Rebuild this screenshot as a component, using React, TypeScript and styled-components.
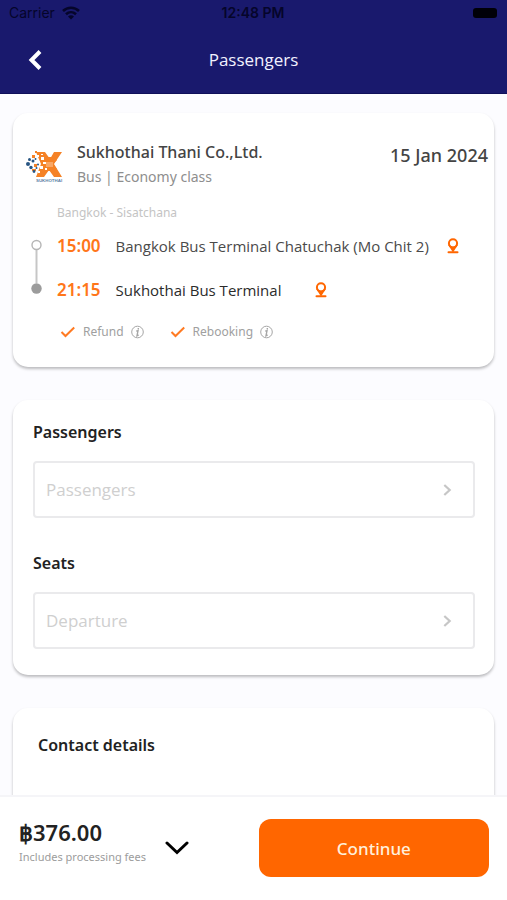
import React, { useId } from "react";
import styled, { createGlobalStyle } from "styled-components";

const orange = "#ff6600";
const lightText = `"Open Sans", "Noto Sans", sans-serif`;

const GlobalStyle = createGlobalStyle`
  *, *::before, *::after { box-sizing: border-box; }
  body { margin: 0; background: #fcfcff; }
  body, button { font-family: "Noto Sans", "Open Sans", sans-serif; }
  h1, h2, p, ul { margin: 0; padding: 0; }
  button { margin: 0; padding: 0; border: 0; background: none; cursor: pointer; }
  svg { display: block; flex: none; }
`;

const Screen = styled.div`
  display: flex;
  flex-direction: column;
  height: 100vh;
`;

const Header = styled.header`
  flex: none;
  background: #19196d;
  border-bottom: 1px solid #10105a;
`;

const StatusBar = styled.div`
  display: grid;
  grid-template-columns: 1fr auto 1fr;
  align-items: center;
  height: 26px;
  padding: 0 10px 0 9px;
  color: #05052a;
  font-family: Inter, sans-serif;
  font-size: 14px;
  line-height: 26px;
`;

const Carrier = styled.span`
  display: flex;
  align-items: center;
  gap: 7px;
`;

const Clock = styled.time`
  font-weight: 600;
`;

const Battery = styled.span`
  justify-self: end;
  width: 24px;
  height: 10px;
  border-radius: 3px;
  background: #000008;
`;

const TitleBar = styled.div`
  display: grid;
  grid-template-columns: 48px 1fr 48px;
  align-items: center;
  height: 67px;
  padding: 0 11px;
`;

const Title = styled.h1`
  color: #f2f2ff;
  font-family: ${lightText};
  font-size: 17px;
  font-weight: 400;
  line-height: 24px;
  text-align: center;
`;

const BackButton = styled.button`
  display: grid;
  place-items: center;
  width: 48px;
  height: 48px;
`;

const Content = styled.main`
  flex: 1;
  min-height: 0;
  overflow-y: auto;
  scrollbar-width: none;
  display: flex;
  flex-direction: column;
  gap: 33px;
  padding: 19px 13px 34px;
`;

const Card = styled.section`
  flex: none;
  border-radius: 15px;
  background: #fff;
  box-shadow: 0 2px 3px rgba(0, 0, 0, 0.26);
`;

const TripCard = styled(Card)`
  padding: 27px 6px 25px 12px;
`;

const FormCard = styled(Card)`
  display: flex;
  flex-direction: column;
  gap: 33px;
  padding: 20px 19px 26px 20px;
`;

const ContactCard = styled(Card)`
  min-height: 160px;
  padding: 25px;
`;

const Operator = styled.div`
  display: flex;
  align-items: flex-start;
`;

const OperatorText = styled.div`
  flex: 1;
  margin-left: 12px;
`;

const LogoBox = styled.div`
  padding-top: 9px;
`;

const OperatorName = styled.h2`
  color: #444;
  font-size: 16px;
  font-weight: 500;
  line-height: 25px;
`;

const ServiceClass = styled.p`
  color: #8e8e8e;
  font-size: 14px;
  line-height: 24px;
`;

const TravelDate = styled.time`
  padding-top: 3px;
  color: #444;
  font-size: 18px;
  font-weight: 500;
  line-height: 25px;
`;

const Route = styled.p`
  margin: 15px 0 12px 32px;
  color: #c4c4c4;
  font-size: 12px;
  line-height: 18px;
`;

const Journey = styled.div`
  display: flex;
  gap: 15px;
  padding-left: 6px;
`;

const Stops = styled.ul`
  flex: 1;
  list-style: none;
`;

const Stop = styled.li`
  display: flex;
  align-items: center;
  height: 44px;
  padding-bottom: 20px;
  line-height: 24px;
`;

const StopTime = styled.time`
  color: #ff761a;
  font-size: 17px;
  font-weight: 600;
`;

const StopName = styled.span<{ $strong?: boolean }>`
  margin-left: 15px;
  color: ${(p) => (p.$strong ? "#2b2b2b" : "#4a4a4a")};
  font-family: ${lightText};
  font-size: 15px;
`;

const PinButton = styled.button<{ $gap: number }>`
  margin-left: ${(p) => p.$gap}px;
`;

const Perks = styled.ul`
  display: flex;
  gap: 26px;
  margin-left: 35px;
  list-style: none;
`;

const Perk = styled.li`
  display: flex;
  align-items: center;
  gap: 7px;
  color: #a0a0a0;
  font-size: 12px;
  line-height: 20px;
`;

const Heading = styled.h2`
  color: #222;
  font-size: 16px;
  font-weight: 600;
  line-height: 24px;
`;

const Picker = styled.button`
  display: flex;
  align-items: center;
  justify-content: space-between;
  width: 100%;
  height: 57px;
  margin-top: 17px;
  padding: 0 18px 0 11px;
  border: 2px solid #eaeaec;
  border-radius: 4px;
  color: #cfcfcf;
  font-family: ${lightText};
  font-size: 17px;
`;

const Footer = styled.footer`
  flex: none;
  display: flex;
  align-items: flex-start;
  justify-content: space-between;
  padding: 22px 18px 23px 19px;
  border-top: 2px solid #f5f5f8;
  background: #fff;
`;

const Summary = styled.div`
  display: flex;
  align-items: center;
  gap: 19px;
`;

const Price = styled.p`
  color: #222;
  font-size: 22px;
  font-weight: 600;
  line-height: 26px;
`;

const FeeNote = styled.p`
  color: #9c9c9c;
  font-size: 11px;
  line-height: 24px;
`;

const DetailsButton = styled.button`
  padding-top: 8px;
`;

const ContinueButton = styled.button`
  width: 49%;
  height: 58px;
  border-radius: 12px;
  background: ${orange};
  color: #fff0dc;
  font-size: 17px;
  font-weight: 500;
`;

const WifiIcon = () => (
  <svg width="18" height="14" viewBox="0 0 18 14" fill="none" stroke="currentColor" strokeWidth="2.6" aria-hidden="true">
    <path d="M1 5C5.6.7 12.4.7 17 5M4 8.2c2.9-2.7 7.1-2.7 10 0" />
    <path d="M9 13.5 6 10.5c1.8-1.6 4.2-1.6 6 0z" fill="currentColor" stroke="none" />
  </svg>
);

const BackIcon = () => (
  <svg width="14" height="20" viewBox="0 0 14 20" fill="none" stroke="#fff" strokeWidth="4" aria-hidden="true">
    <path d="M12 1.5 3.5 10l8.5 8.5" />
  </svg>
);

const PinIcon = () => (
  <svg width="12" height="16" viewBox="0 0 12 16" fill="none" stroke={orange} aria-hidden="true">
    <circle cx="6" cy="5.3" r="4.1" strokeWidth="2" />
    <path d="M3 8.4 6 13l3-4.6-3 1.3z" fill={orange} strokeWidth="1.6" />
    <path d="M1.5 14.3h9" strokeWidth="2" strokeLinecap="round" />
  </svg>
);

const CheckIcon = () => (
  <svg width="16" height="12" viewBox="0 0 16 12" fill="none" stroke="#ff7a22" strokeWidth="2" aria-hidden="true">
    <path d="m1.5 6 4 4L14.2 1.5" />
  </svg>
);

const InfoIcon = () => (
  <svg width="13" height="14" viewBox="0 0 13 14" fill="none" stroke="#a6a6a6" aria-hidden="true">
    <circle cx="6.5" cy="7" r="5.8" />
    <path d="M7.3 3v1.4M5.2 6.2l1.8-.5-1 5 1.6-.7" strokeWidth="1.4" />
  </svg>
);

const ForwardIcon = () => (
  <svg width="12" height="12" viewBox="0 0 12 12" fill="none" stroke="#c6c6c6" strokeWidth="2.2" aria-hidden="true">
    <path d="m1.3 1 5.4 5-5.4 5" />
  </svg>
);

const ExpandIcon = () => (
  <svg width="24" height="14" viewBox="0 0 24 14" fill="none" stroke="#000" strokeWidth="3" strokeLinecap="round" aria-hidden="true">
    <path d="m2 2 10 9.5L22 2" />
  </svg>
);

const Timeline = () => (
  <svg width="11" height="60" viewBox="0 0 11 60" fill="none" aria-hidden="true">
    <path d="M5.5 16v33" stroke="#c6c6c6" strokeWidth="2" />
    <circle cx="5.5" cy="11" r="4.5" fill="#fff" stroke="#b5b5b5" strokeWidth="1.4" />
    <circle cx="5.5" cy="54.5" r="5.2" fill="#9c9c9c" />
  </svg>
);

const OperatorLogo = () => (
  <svg width="40" height="33" viewBox="0 0 40 33" role="img" aria-label="Sukhothai">
    <path d="M11 3h9l5 7 4-7h8l-8 12 8 13h-8l-5-7-5 7h-8l5-13z" fill="#f58226" />
    <path d="M15 8h14l3 3-4 4 4 5-3 2H18z" fill="#f58226" />
    <g fill="#f58226">
      <path d="M7 6h3v3H7zM9 15h3v3H9zM10 2h2v2h-2zM7 20h4v2H7z" />
    </g>
    <path d="M11 6h3v2h-3zM16 8h3v3h-3zM12 12h3v2h-3zM18 13h3v2h-3zM15 17h3v3h-3zM20 19h2v2h-2zM13 22h2v2h-2zM16 5h2v1h-2z" fill="#fff" />
    <path d="M21 13h7v5h-7z" fill="#f9a765" />
    <g fill="#285582">
      <circle cx="4.5" cy="10.5" r="1.5" />
      <circle cx="8" cy="12" r="1.5" />
      <circle cx="3" cy="15" r="2" />
      <circle cx="6" cy="18.5" r="1.7" />
      <circle cx="10.5" cy="10" r="1" />
      <circle cx="9" cy="22.5" r="1.4" />
      <circle cx="11.5" cy="19" r="1" />
      <circle cx="13" cy="15.5" r="1" />
    </g>
    <text x="11" y="32.5" fill="#5d82a6" fontSize="4.4" fontWeight="700" fontFamily="Liberation Sans, sans-serif">SUKHOTHAI</text>
  </svg>
);

function PickerField({ label, placeholder }: { label: string; placeholder: string }) {
  const id = useId();
  return (
    <div>
      <Heading id={id}>{label}</Heading>
      <Picker type="button" aria-labelledby={id} aria-haspopup="dialog">
        <span>{placeholder}</span>
        <ForwardIcon />
      </Picker>
    </div>
  );
}

const stops = [
  { time: "15:00", name: "Bangkok Bus Terminal Chatuchak (Mo Chit 2)", strong: false, gap: 18 },
  { time: "21:15", name: "Sukhothai Bus Terminal", strong: true, gap: 34 },
];

const perks = ["Refund", "Rebooking"];

export default function App() {
  return (
    <>
      <GlobalStyle />
      <Screen>
        <Header>
          <StatusBar>
            <Carrier>Carrier <WifiIcon /></Carrier>
            <Clock>12:48 PM</Clock>
            <Battery />
          </StatusBar>
          <TitleBar>
            <BackButton type="button" aria-label="Back"><BackIcon /></BackButton>
            <Title>Passengers</Title>
          </TitleBar>
        </Header>
        <Content>
          <TripCard>
            <Operator>
              <LogoBox><OperatorLogo /></LogoBox>
              <OperatorText>
                <OperatorName>Sukhothai Thani Co.,Ltd.</OperatorName>
                <ServiceClass>Bus | Economy class</ServiceClass>
              </OperatorText>
              <TravelDate dateTime="2024-01-15">15 Jan 2024</TravelDate>
            </Operator>
            <Route>Bangkok - Sisatchana</Route>
            <Journey>
              <Timeline />
              <Stops>
                {stops.map((s) => (
                  <Stop key={s.time}>
                    <StopTime>{s.time}</StopTime>
                    <StopName $strong={s.strong}>{s.name}</StopName>
                    <PinButton type="button" $gap={s.gap} aria-label={`Map of ${s.name}`}><PinIcon /></PinButton>
                  </Stop>
                ))}
              </Stops>
            </Journey>
            <Perks>
              {perks.map((perk) => (
                <Perk key={perk}>
                  <CheckIcon />
                  {perk}
                  <button type="button" aria-label={`About ${perk}`}><InfoIcon /></button>
                </Perk>
              ))}
            </Perks>
          </TripCard>
          <FormCard>
            <PickerField label="Passengers" placeholder="Passengers" />
            <PickerField label="Seats" placeholder="Departure" />
          </FormCard>
          <ContactCard>
            <Heading>Contact details</Heading>
          </ContactCard>
        </Content>
        <Footer>
          <Summary>
            <div>
              <Price>฿376.00</Price>
              <FeeNote>Includes processing fees</FeeNote>
            </div>
            <DetailsButton type="button" aria-label="Price details"><ExpandIcon /></DetailsButton>
          </Summary>
          <ContinueButton type="button">Continue</ContinueButton>
        </Footer>
      </Screen>
    </>
  );
}
